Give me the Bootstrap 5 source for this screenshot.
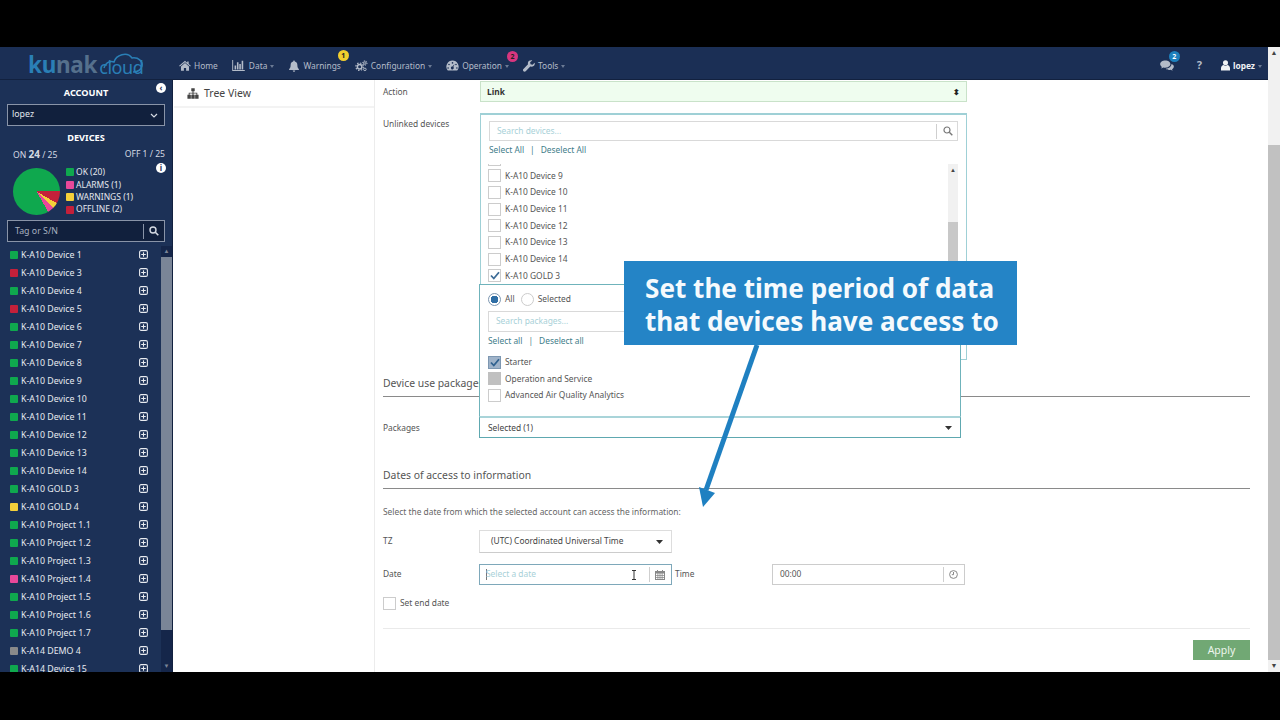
<!DOCTYPE html>
<html lang="en">
<head>
<meta charset="utf-8">
<title>Kunak Cloud</title>
<link href="https://cdn.jsdelivr.net/npm/bootstrap@5.3.0/dist/css/bootstrap.min.css" rel="stylesheet">
<style>
html,body{height:720px;overflow:hidden;background:#000;}
body{font-family:"Noto Sans",sans-serif;font-size:8.4px;color:#555;padding-top:47px;}
svg{display:block;flex:none;fill:currentColor;}
.stage{height:625px;background:#fff;}
.page{min-width:0;}
.vbar{width:12px;background:#f1f1f1;}
.vbar-thumb{height:515px;margin-top:86px;background:#c1c1c1;}
.vbar-arrow{height:12px;font-size:7px;line-height:12px;text-align:center;color:#444;}
.topnav{height:33px;flex:none;background:#1b2f55;border-bottom:1px solid #12213f;color:#b4bcc9;}
.logo-box{width:173px;color:#2a7fb6;padding-top:4px;}
.logo-word{font-size:22.500px;font-weight:700;line-height:30px;letter-spacing:-.3px;margin-left:28px;}
.logo-word i{font-style:normal;color:#55708c;}
.logo-cloud{font-size:18px;font-weight:400;line-height:30px;margin-left:2px;padding-top:3px;letter-spacing:-.4px;}
.cloud-line{left:103px;top:6px;}
.nav-entry{color:#b4bcc9;position:relative;white-space:nowrap;padding-top:6px;}
.nav-main{padding-left:6px;gap:14px;}
.ic3{margin-right:3px;}
.caret-dn{width:0;height:0;border-left:2.500px solid transparent;border-right:2.500px solid transparent;border-top:3px solid #6b7a94;margin-left:3px;margin-top:2px;}
.bubble{position:absolute;width:11px;height:11px;border-radius:50%;font-size:7px;line-height:11px;font-weight:700;text-align:center;}
.b-yellow{background:#f3cf2e;color:#222;right:-8px;top:-4px;}
.b-pink{background:#d8367f;color:#222;right:-9px;top:-3px;}
.b-blue{background:#1d80bd;color:#fff;right:-6px;top:-3px;}
.nav-end{padding-right:6px;}
.help-mark{font-size:11px;line-height:12px;padding-top:4px;margin-left:23px;}
.user-mark{color:#f0f2f5;margin-left:19px;}
.side{width:173px;background:#1c3157;color:#e4e8ee;border-right:1px solid #12213f;position:relative;}
.side-title{font-weight:700;font-size:9.200px;text-align:center;color:#fff;line-height:12px;}
.t-acc{margin-top:7px;margin-bottom:5px;}
.t-dev{margin-top:6px;}
.dark-field{height:22px;margin:0 7px;background:#11203d;border:1px solid #8994a8;color:#e4e8ee;padding:0 6px 0 4px;font-size:8.800px;}
.onoff{margin:4px 7px 0;line-height:12px;padding:0 0 0 6px;color:#d5dae3;font-size:8.600px;}
.onoff b{font-size:10px;}
.pie-row{margin-top:6px;padding-left:13px;height:48px;flex:none;}
.pie-disc{width:47px;height:47px;border-radius:50%;background:conic-gradient(#0fa84e 0 90deg,#c4203a 90deg 120deg,#f4d03a 120deg 135deg,#e8489a 135deg 150deg,#0fa84e 150deg);}
.legend{margin-left:6px;line-height:12.400px;font-size:8.500px;}
.sw{width:8px;height:8px;margin-right:2px;border-radius:1px;flex:none;}
.s-g{background:#0fa84e}.s-r{background:#c4203a}.s-y{background:#f4d03a}.s-p{background:#e8489a}.s-x{background:#8a8a8a}
.side-search{margin-top:5px;flex:none;}
.side-search span{color:#a9b2c0;padding:2px 0 0 3px;}
.search-sep{border-left:1px solid #8994a8;height:15px;padding-left:5px;margin-right:-1px;}
.dev-wrap{margin-top:4px;min-height:0;}
.dev-list{min-width:0;overflow:hidden;padding-left:10px;}
.dev-row{height:18px;flex:none;color:#e8ebf0;font-size:8.800px;padding-right:13px;}
.dev-row .sw{margin-right:3px;}
.dev-name{padding-top:2px;}
.dev-row svg,.dev-row .sw{margin-top:-1px;}
.side-bar{width:11px;background:#15264a;}
.side-thumb{height:373px;background:#7a8597;}
.side-arrow{height:11px;font-size:6px;line-height:11px;color:#7a8597;text-align:center;}
.round-ico{position:absolute;right:6px;width:10px;height:10px;border-radius:50%;background:#fff;color:#1c3157;font-size:8px;font-weight:700;line-height:10px;text-align:center;}
.r1{top:3px}.r2{top:83px}
.tree{width:202px;flex:none;border-right:1px solid #ececec;}
.tree-head{height:28px;border-bottom:2px solid #f3f3f3;margin-left:1px;padding:1px 0 0 13px;color:#444;font-size:10.500px;gap:5px;}
.work{padding:1px 18px 0 8px;min-width:0;position:relative;}
.lab{width:96px;flex:none;color:#555;}
.lab.wide-lab{width:97px;}
.low-txt{padding-top:2px;}
.act-row{height:21px;}
.link-select{height:21px;width:487px;background:#effdef;border:1px solid #c9e2c9;padding:0 6px;font-weight:700;color:#333;}
.sort-car{font-size:8px;line-height:1;color:#222;}
.unl-row{margin-top:11px;height:247px;}
.unl-lab{padding-top:5px;}
.unl-box{width:487px;border:1px solid #9fd0d6;border-top-width:2px;padding:6px 8px 0;height:247px;overflow:hidden;}
.txt-field{height:20px;border:1px solid #d9d9d9;padding:0 7px;color:#a8d1d8;}
.ico-cell{border-left:1px solid #cfcfcf;height:15px;padding-left:6px;margin-right:-3px;color:#777;}
.pick-links{color:#3f7d8a;height:18px;gap:6px;}
.dev-clip{height:121px;margin:5px 0 0 -1px;overflow:hidden;}
.dev-scroll{margin-top:-13px;flex:1;min-width:0;}
.pick-row{height:16.670px;color:#555;flex:none;}
.tick{width:13px;height:13px;border:1px solid #ccc;background:#fff;margin-right:4px;flex:none;color:#3d6c97;}
.tick.on-fill{background:#9fb3c9;border-color:#7d97b1;color:#2f618f;}
.tick.grey-fill{background:#c0c0c0;border-color:#c0c0c0;}
.mini-bar{width:10px;background:#f1f1f1;}
.mini-thumb{height:70px;margin-top:46px;background:#c8c8c8;}
.mini-arrow{height:12px;font-size:6px;text-align:center;line-height:12px;color:#444;}
.sect{height:26px;border-bottom:1px solid #8a8a8a;font-size:10.400px;color:#555;}
.s1{margin-top:11px;padding-top:5px;}
.s2{margin-top:25px;padding-top:5px;}
.pack-row{margin-top:19px;height:22px;}
.pack-anchor{width:482px;position:relative;}
.pack-trigger{height:22px;border:1px solid #5ea8b0;border-top:2px solid #a9d4d9;padding:0 8px;color:#444;background:#fff;}
.pack-panel{position:absolute;left:0;right:0;bottom:100%;height:132px;background:#fff;border:1px solid #6fb3bb;border-bottom:0;padding:8px 8px 6px;}
.radio-dot{width:13px;height:13px;border:1px solid #7d97b1;border-radius:50%;margin-right:4px;flex:none;}
.radio-dot.sel{background:radial-gradient(circle,#2f6ea5 0 3.600px,#fff 4px);}
.radio-dot.off{border-color:#ccc;margin-left:6px;}
.pk-search{margin-top:5px;width:462px;height:21px;}
.pk-links{color:#3f7d8a;margin-top:2px;height:14px;gap:6px;}
.pk-list{margin-top:6px;}
.note{margin-top:17px;height:12px;line-height:12px;color:#666;}
.tz-row{margin-top:12px;height:23px;}
.tz-box{width:193px;height:23px;border:1px solid #ddd;border-bottom-color:#ccc;padding:0 8px 0 11px;color:#444;}
.date-row{margin-top:11px;height:21px;}
.date-box{width:193px;height:21px;border:1px solid #7ea8ba;padding:0 6px;color:#a8d1d8;}
.cursor-bar{width:1px;height:11px;background:#777;margin-right:-1px;}
.ibeam{color:#333;margin-right:12px;}
.time-lab{width:97px;margin-left:3px;flex:none;color:#555;}
.time-box{width:193px;height:21px;border:1px solid #ccc;padding:0 6px 0 7px;color:#555;}
.ico-cell.wide{padding-left:5px;margin-right:0;color:#888;}
.end-row{margin-top:12px;height:12px;}
.end-line{margin-top:19px;border-top:1px solid #eaeaea;}
.apply-row{margin-top:11px;}
.apply-btn{width:57px;height:20px;background:#71a874;color:#eef6ee;font-size:10.500px;line-height:20px;text-align:center;padding:0;border:0;border-radius:0;}
.callout{position:absolute;left:624px;top:261px;width:393px;height:84px;background:#2484c6;color:#f5fafd;font-weight:700;font-size:26.100px;line-height:32.500px;padding:11px 0 0 21px;z-index:5;white-space:nowrap;}
.arrow-lay{position:absolute;left:690px;top:340px;z-index:4;}
</style>
</head>
<body>
<div class="stage d-flex">
 <div class="page flex-grow-1 d-flex flex-column">
  <nav class="topnav d-flex align-items-center">
   <div class="logo-box d-flex align-items-center position-relative">
    <span class="logo-word">ku<i>nak</i></span><span class="logo-cloud">cloud</span>
    <svg class="position-absolute cloud-line" width="41" height="23" viewBox="0 0 41 23" fill="none"><path d="M1 17C3 10 9 10 11 11 13 4 24 0 29 7 36 6 40 11 39 15 38 19 35 21 30 21" fill="none" stroke="#2a7fb6" stroke-width="1.500"/></svg>
   </div>
   <div class="nav-main d-flex align-items-center flex-grow-1">
    <div class="nav-entry d-flex align-items-center"><svg width="12" height="11" viewBox="0 0 16 15" class="ic3"><path d="M8 1 0 8l1 1 7-6 7 6 1-1-3-2.600V2h-2v1.800zM2.500 9v5.500h4V11h3v3.500h4V9L8 4.200z"/></svg>Home</div>
    <div class="nav-entry d-flex align-items-center"><svg width="13" height="11" viewBox="0 0 16 14" class="me-1"><path d="M0 0h1.200v12.800H16V14H0zM3 7h2v5H3zM6 3h2v9H6zM9 5h2v7H9zM12 1h2v11h-2z"/></svg>Data<span class="caret-dn"></span></div>
    <div class="nav-entry d-flex align-items-center"><svg width="12" height="12" viewBox="0 0 16 16" class="ic3"><path d="M8 .6a1.100 1.100 0 0 0-1 1.500C4.500 2.600 3.500 4.500 3.500 7c0 3-1 4-2 5v1.300h13V12c-1-1-2-2-2-5 0-2.500-1-4.400-3.500-4.900A1.100 1.100 0 0 0 8 .6zM6.300 14a1.700 1.700 0 0 0 3.400 0z"/></svg>Warnings<span class="bubble b-yellow">1</span></div>
    <div class="nav-entry d-flex align-items-center"><svg width="13" height="12" viewBox="0 0 17 16" class="ic3" fill="none"><circle cx="6" cy="9" r="3" fill="none" stroke="currentColor" stroke-width="2"/><circle cx="6" cy="9" r="5" fill="none" stroke="currentColor" stroke-width="1.600" stroke-dasharray="2 1.900"/><circle cx="13" cy="4" r="1.700" fill="none" stroke="currentColor" stroke-width="1.300"/><circle cx="13" cy="4" r="3" fill="none" stroke="currentColor" stroke-width="1.200" stroke-dasharray="1.500 1.300"/><circle cx="13" cy="12.500" r="1.700" fill="none" stroke="currentColor" stroke-width="1.300"/></svg>Configuration<span class="caret-dn"></span></div>
    <div class="nav-entry d-flex align-items-center"><svg width="13" height="11" viewBox="0 0 16 13" class="ic3"><path fill-rule="evenodd" d="M8 .5a7.500 7.500 0 0 0-6.500 11.300c.2.400.6.700 1 .7h11c.4 0 .8-.3 1-.7A7.500 7.500 0 0 0 8 .5zM8 2.300a1 1 0 1 1 0 2 1 1 0 0 1 0-2zM3.700 4.300a1 1 0 1 1 0 2 1 1 0 0 1 0-2zM12.300 4.300a1 1 0 1 1 0 2 1 1 0 0 1 0-2zM2.600 8.500a1 1 0 1 1 0 2 1 1 0 0 1 0-2zM13.400 8.500a1 1 0 1 1 0 2 1 1 0 0 1 0-2zM10.600 4.700 9 8.300a1.700 1.700 0 1 1-1.100-.5z"/></svg>Operation<span class="caret-dn"></span><span class="bubble b-pink">2</span></div>
    <div class="nav-entry d-flex align-items-center"><svg width="12" height="12" viewBox="0 0 16 16" class="ic3"><path d="M15.500 3.500 12.800 6.200 10 5.500 9.500 3 12.400.5C10-.3 7.200.8 6.600 3.300c-.2.900-.1 1.700.1 2.500L.6 11.900a2.200 2.200 0 0 0 0 3c.8.800 2.200.8 3 0l6.100-6.100c2.800.8 5.600-.8 6-3.500.1-.6 0-1.200-.2-1.800z"/></svg>Tools<span class="caret-dn"></span></div>
   </div>
   <div class="nav-end d-flex align-items-center">
    <div class="nav-entry"><svg width="14" height="12" viewBox="0 0 16 14"><path d="M6 .5C2.700.5 0 2.400 0 4.800c0 1.300.8 2.500 2 3.300L1.200 10l2.600-1.200c.7.200 1.400.3 2.200.3 3.300 0 6-1.900 6-4.300S9.300.5 6 .5zM13.200 4.800c0 3-3 5.300-6.700 5.500 1 .9 2.500 1.400 4 1.400.6 0 1.300-.1 1.900-.3l2.100 1.100-.6-1.700c1.300-.8 2.100-1.900 2.100-3.200 0-1.200-1-2.100-2.800-2.800z"/></svg><span class="bubble b-blue">2</span></div>
    <div class="nav-entry fw-bold help-mark">?</div>
    <div class="nav-entry user-mark d-flex align-items-center"><svg width="9" height="11" viewBox="0 0 10 12" class="ic3"><circle cx="5" cy="3" r="2.800"/><path d="M0 11.500V9c0-2 1.500-3.200 3-3.500.6.500 1.300.7 2 .7s1.400-.2 2-.7c1.500.3 3 1.500 3 3.500v2.500z"/></svg><b>lopez</b><span class="caret-dn"></span></div>
   </div>
  </nav>
  <div class="flex-grow-1 d-flex" style="min-height:0">
   <aside class="side d-flex flex-column">
    <div class="side-title t-acc">ACCOUNT</div>
    <span class="round-ico r1">‹</span>
    <div class="dark-field d-flex align-items-center justify-content-between flex-shrink-0"><span>lopez</span><svg width="8" height="5" viewBox="0 0 8 5" fill="none"><path d="M1 1l3 3 3-3" fill="none" stroke="#d5dae3" stroke-width="1.200"/></svg></div>
    <div class="side-title t-dev">DEVICES</div>
    <div class="onoff d-flex justify-content-between"><span>ON <b>24</b> / 25</span><span>OFF 1 / 25</span></div>
    <span class="round-ico r2">i</span>
    <div class="pie-row d-flex align-items-center">
     <div class="pie-disc"></div>
     <div class="legend">
      <div class="d-flex align-items-center"><span class="sw s-g"></span>OK (20)</div>
      <div class="d-flex align-items-center"><span class="sw s-p"></span>ALARMS (1)</div>
      <div class="d-flex align-items-center"><span class="sw s-y"></span>WARNINGS (1)</div>
      <div class="d-flex align-items-center"><span class="sw s-r"></span>OFFLINE (2)</div>
     </div>
    </div>
    <div class="dark-field side-search d-flex align-items-center justify-content-between"><span>Tag or S/N</span><div class="search-sep d-flex align-items-center"><svg width="10" height="10" viewBox="0 0 10 10" fill="none"><circle cx="4" cy="4" r="3" fill="none" stroke="#d5dae3" stroke-width="1.400"/><path d="M6.300 6.300 9.300 9.300" stroke="#d5dae3" stroke-width="1.600"/></svg></div></div>
    <div class="dev-wrap flex-grow-1 d-flex">
     <div class="dev-list flex-grow-1 d-flex flex-column" id="devs"></div>
     <div class="side-bar d-flex flex-column"><div class="side-arrow">▲</div><div class="side-thumb"></div><div class="flex-grow-1"></div><div class="side-arrow">▼</div></div>
    </div>
   </aside>
   <section class="tree">
    <div class="tree-head d-flex align-items-center"><svg width="12" height="11" viewBox="0 0 14 12"><path d="M5 0h4v3.500H7.600V5H12v2.500h1.500V12H9.500V7.500H11V6H7.600v1.500H9V12H5V7.500h1.400V6H3v1.500h1.500V12H.5V7.500H2V5h4.400V3.500H5z"/></svg><span>Tree View</span></div>
   </section>
   <main class="work flex-grow-1">
    <div class="d-flex align-items-center act-row"><div class="lab wide-lab low-txt">Action</div><div class="link-select d-flex align-items-center justify-content-between"><span class="low-txt">Link</span><span class="sort-car">⬍</span></div></div>
    <div class="d-flex unl-row">
     <div class="lab wide-lab unl-lab">Unlinked devices</div>
     <div class="unl-box">
      <div class="txt-field d-flex align-items-center justify-content-between"><span>Search devices...</span><div class="ico-cell d-flex align-items-center"><svg width="10" height="10" viewBox="0 0 10 10" fill="none"><circle cx="4" cy="4" r="3" fill="none" stroke="#777" stroke-width="1.200"/><path d="M6.300 6.300 9.300 9.300" stroke="#777" stroke-width="1.400"/></svg></div></div>
      <div class="pick-links d-flex align-items-center"><span>Select All</span><span>|</span><span>Deselect All</span></div>
      <div class="dev-clip d-flex">
       <div class="dev-scroll" id="unl"></div>
       <div class="mini-bar"><div class="mini-arrow">▲</div><div class="mini-thumb"></div></div>
      </div>
     </div>
    </div>
    <div class="sect s1">Device use packages</div>
    <div class="d-flex align-items-center pack-row">
     <div class="lab low-txt">Packages</div>
     <div class="pack-anchor">
      <div class="pack-panel">
       <div class="d-flex align-items-center"><span class="radio-dot sel"></span><span>All</span><span class="radio-dot off"></span><span>Selected</span></div>
       <div class="txt-field pk-search d-flex align-items-center"><span>Search packages...</span></div>
       <div class="pk-links d-flex align-items-center"><span>Select all</span><span>|</span><span>Deselect all</span></div>
       <div class="pk-list">
        <div class="pick-row d-flex align-items-center"><span class="tick on-fill d-flex align-items-center justify-content-center"><svg width="10" height="9" viewBox="0 0 10 9" fill="none"><path d="M1 4.500 3.800 7.500 9 1.200" fill="none" stroke="currentColor" stroke-width="1.800"/></svg></span>Starter</div>
        <div class="pick-row d-flex align-items-center"><span class="tick grey-fill"></span>Operation and Service</div>
        <div class="pick-row d-flex align-items-center"><span class="tick"></span>Advanced Air Quality Analytics</div>
       </div>
      </div>
      <div class="pack-trigger d-flex align-items-center justify-content-between"><span class="low-txt">Selected (1)</span><svg width="7" height="4" viewBox="0 0 7 4"><path d="M0 0h7L3.500 4z" fill="#333"/></svg></div>
     </div>
    </div>
    <div class="sect s2">Dates of access to information</div>
    <div class="note">Select the date from which the selected account can access the information:</div>
    <div class="d-flex align-items-center tz-row"><div class="lab">TZ</div><div class="tz-box d-flex align-items-center justify-content-between"><span>(UTC) Coordinated Universal Time</span><svg width="7" height="4" viewBox="0 0 7 4"><path d="M0 0h7L3.500 4z" fill="#333"/></svg></div></div>
    <div class="d-flex align-items-center date-row">
     <div class="lab">Date</div>
     <div class="date-box d-flex align-items-center"><span class="cursor-bar"></span><span class="flex-grow-1">Select a date</span>
      <svg class="ibeam" width="6" height="10" viewBox="0 0 6 10" fill="none"><path d="M1 .5h4M3 .5v9M1 9.500h4" fill="none" stroke="#333" stroke-width="1"/></svg>
      <div class="ico-cell wide d-flex align-items-center"><svg width="10" height="10" viewBox="0 0 10 10"><path fill="#888" d="M0 1h2V0h1v1h4V0h1v1h2v9H0zM1 3.500V5h1.500V3.500zM3.300 3.500V5h1.300V3.500zM5.400 3.500V5h1.300V3.500zM7.500 3.500V5H9V3.500zM1 5.800v1.400h1.500V5.800zM3.300 5.800v1.400h1.300V5.800zM5.400 5.800v1.400h1.300V5.800zM7.500 5.800v1.400H9V5.800zM1 8V9h1.500V8zM3.300 8V9h1.300V8zM5.400 8V9h1.300V8zM7.500 8V9H9V8z"/></svg></div>
     </div>
     <div class="time-lab">Time</div>
     <div class="time-box d-flex align-items-center justify-content-between"><span>00:00</span><div class="ico-cell wide d-flex align-items-center"><svg width="9" height="9" viewBox="0 0 9 9" fill="none"><circle cx="4.500" cy="4.500" r="3.900" fill="none" stroke="#888" stroke-width="1"/><path d="M4.500 2v2.700H2.800" fill="none" stroke="#888" stroke-width="1"/></svg></div></div>
    </div>
    <div class="d-flex align-items-center end-row"><span class="tick"></span><span>Set end date</span></div>
    <div class="end-line"></div>
    <div class="apply-row d-flex justify-content-end"><button class="btn apply-btn" type="button">Apply</button></div>
   </main>
  </div>
 </div>
 <div class="vbar d-flex flex-column"><div class="vbar-arrow">▲</div><div class="vbar-thumb"></div><div class="flex-grow-1"></div><div class="vbar-arrow">▼</div></div>
</div>
<svg class="arrow-lay" width="80" height="175" viewBox="0 0 80 175" fill="none"><path d="M67 5 16 150" fill="none" stroke="#1f80c1" stroke-width="5"/><path d="M13 167 9 147 25 153z" fill="#1f80c1"/></svg>
<div class="callout">Set the time period of data<br>that devices have access to</div>
<script>
var devs=[["K-A10 Device 1","g"],["K-A10 Device 3","r"],["K-A10 Device 4","g"],["K-A10 Device 5","r"],["K-A10 Device 6","g"],["K-A10 Device 7","g"],["K-A10 Device 8","g"],["K-A10 Device 9","g"],["K-A10 Device 10","g"],["K-A10 Device 11","g"],["K-A10 Device 12","g"],["K-A10 Device 13","g"],["K-A10 Device 14","g"],["K-A10 GOLD 3","g"],["K-A10 GOLD 4","y"],["K-A10 Project 1.1","g"],["K-A10 Project 1.2","g"],["K-A10 Project 1.3","g"],["K-A10 Project 1.4","p"],["K-A10 Project 1.5","g"],["K-A10 Project 1.6","g"],["K-A10 Project 1.7","g"],["K-A14 DEMO 4","x"],["K-A14 Device 15","g"]];
var plus='<svg width="9" height="9" viewBox="0 0 9 9" fill="none"><rect x=".6" y=".6" width="7.800" height="7.800" rx="1.500" fill="none" stroke="#e8ebf0" stroke-width="1.100"/><path d="M4.500 2.200v4.600M2.200 4.500h4.600" stroke="#e8ebf0" stroke-width="1.100"/></svg>';
document.getElementById('devs').innerHTML=devs.map(function(d){return '<div class="dev-row d-flex align-items-center"><span class="sw s-'+d[1]+'"></span><span class="dev-name flex-grow-1">'+d[0]+'</span>'+plus+'</div>';}).join('');
var unl=["","K-A10 Device 9","K-A10 Device 10","K-A10 Device 11","K-A10 Device 12","K-A10 Device 13","K-A10 Device 14","K-A10 GOLD 3"];
document.getElementById('unl').innerHTML=unl.map(function(n){var on=n.indexOf('GOLD')>0;return '<div class="pick-row d-flex align-items-center"><span class="tick d-flex align-items-center justify-content-center">'+(on?'<svg width="10" height="9" viewBox="0 0 10 9" fill="none"><path d="M1 4.500 3.800 7.500 9 1.200" fill="none" stroke="#3d6c97" stroke-width="1.800"/></svg>':'')+'</span>'+n+'</div>';}).join('');
</script>
<script src="https://cdn.jsdelivr.net/npm/bootstrap@5.3.0/dist/js/bootstrap.bundle.min.js"></script>
</body>
</html>
